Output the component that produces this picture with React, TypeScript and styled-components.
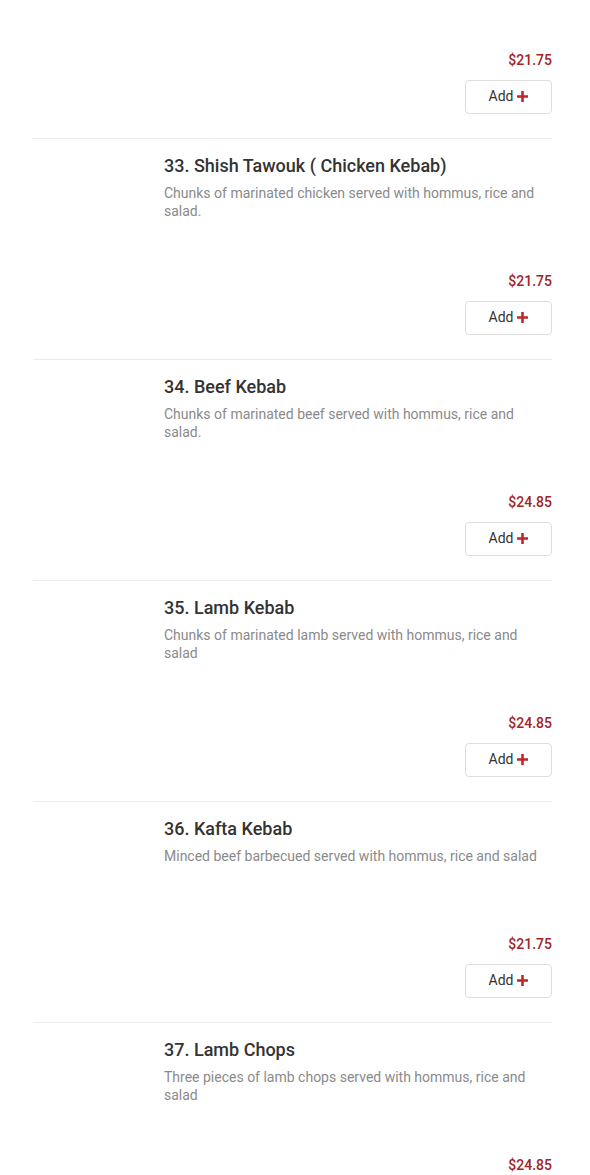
import React from "react";
import styled, {createGlobalStyle} from "styled-components";

const GlobalStyle = createGlobalStyle`
  html, body {
    margin: 0;
    padding: 0;
    background: #ffffff;
    font-family: Roboto, "Noto Sans", Arial, sans-serif;
  }
`;

type MenuItem = {
	title: string;
	description: string;
	price: string;
}

const items: MenuItem[] = [
	{
		title: "33. Shish Tawouk ( Chicken Kebab)",
		description: "Chunks of marinated chicken served with hommus, rice and salad.",
		price: "$21.75"
	},
	{
		title: "34. Beef Kebab",
		description: "Chunks of marinated beef served with hommus, rice and salad.",
		price: "$24.85"
	},
	{
		title: "35. Lamb Kebab",
		description: "Chunks of marinated lamb served with hommus, rice and salad",
		price: "$24.85"
	},
	{
		title: "36. Kafta Kebab",
		description: "Minced beef barbecued served with hommus, rice and salad",
		price: "$21.75"
	},
	{
		title: "37. Lamb Chops",
		description: "Three pieces of lamb chops served with hommus, rice and salad",
		price: "$24.85"
	}
];

const Page = styled.div`
  padding: 0 38px 0 33px;
  height: 1175px;
  overflow: hidden;
`;

const ItemTail = styled.div`
  padding: 51px 0 24px;
`;

const ItemRow = styled.div`
  display: grid;
  grid-template-columns: 115px 1fr;
  column-gap: 16px;
  border-top: 1px solid #ececec;
  padding: 16px 0 24px;
`;

const ImageSlot = styled.div`
  min-height: 1px;
`;

const Info = styled.div`
  display: flex;
  flex-direction: column;
  min-height: 180px;
`;

const Title = styled.h3`
  margin: 0;
  font-size: 18px;
  line-height: 22px;
  font-weight: 500;
  color: #333333;
`;

const Description = styled.p`
  margin: 7px 0 0;
  font-size: 14px;
  line-height: 18px;
  color: #8a8a8a;
`;

const PriceBlock = styled.div`
  display: flex;
  flex-direction: column;
  align-items: flex-end;
  margin-top: auto;
`;

const Price = styled.span`
  font-size: 14px;
  line-height: 18px;
  font-weight: 500;
  color: #a02626;
`;

const AddButton = styled.button`
  margin-top: 11px;
  width: 87px;
  height: 34px;
  display: flex;
  align-items: center;
  justify-content: center;
  gap: 4px;
  background: #ffffff;
  border: 1px solid #dedede;
  border-radius: 4px;
  font-family: Roboto, Arial, sans-serif;
  font-size: 14px;
  color: #333333;
  padding: 0 0 2px;
  cursor: pointer;
`;

const PlusIcon = () => (
	<svg width="11" height="11" viewBox="0 0 12 12" aria-hidden="true">
		<path d="M4.6 0h2.8v4.6H12v2.8H7.4V12H4.6V7.4H0V4.6h4.6z" fill="#c0262a"/>
	</svg>
);

const PriceAndAdd = ({price}: {price: string}) => (
	<PriceBlock>
		<Price>{price}</Price>
		<AddButton>
			Add <PlusIcon/>
		</AddButton>
	</PriceBlock>
);

const Item = ({item}: {item: MenuItem}) => (
	<ItemRow>
		<ImageSlot/>
		<Info>
			<Title>{item.title}</Title>
			<Description>{item.description}</Description>
			<PriceAndAdd price={item.price}/>
		</Info>
	</ItemRow>
);

export default function App() {
	return (
		<>
			<GlobalStyle/>
			<Page>
				<ItemTail>
					<PriceAndAdd price="$21.75"/>
				</ItemTail>
				{items.map(item => <Item key={item.title} item={item}/>)}
			</Page>
		</>
	);
}
